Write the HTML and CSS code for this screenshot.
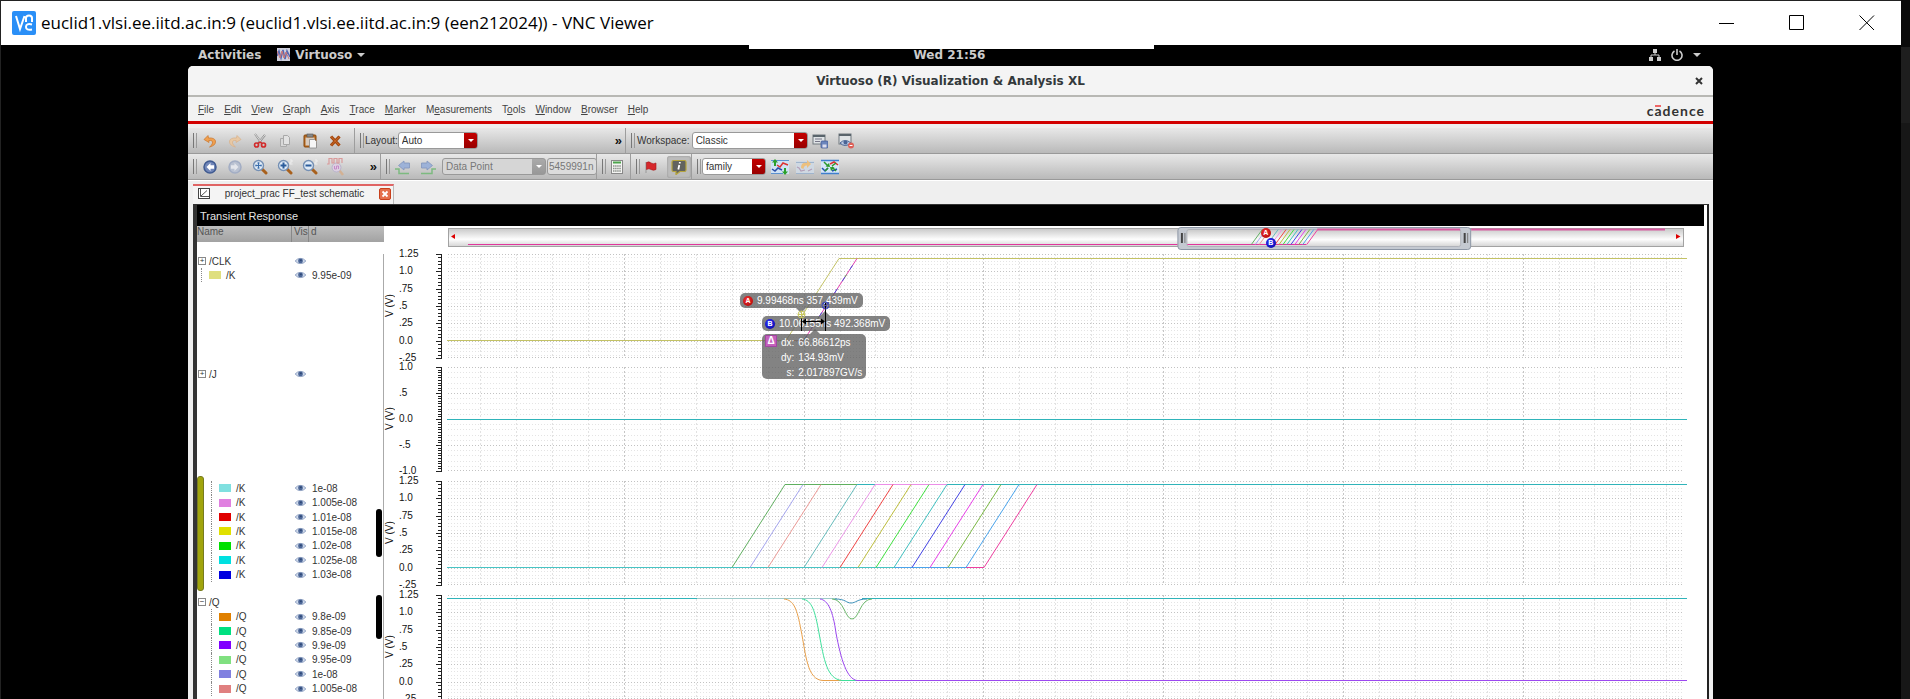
FILE: index.html
```html
<!DOCTYPE html>
<html lang="en">
<head>
<meta charset="utf-8">
<title>euclid1.vlsi.ee.iitd.ac.in:9 - VNC Viewer</title>
<link rel="stylesheet" href="styles.css">
</head>
<body>
<svg class="defs" aria-hidden="true">
  <symbol id="eye" viewBox="0 0 11 8"><path d="M0.3 4C2.5 .6 8.5 .6 10.7 4C8.5 7.4 2.5 7.4 .3 4Z" fill="#cfd9ea" stroke="#8a9dbf" stroke-width=".9"/><circle cx="5.5" cy="3.9" r="2.4" fill="#4a6596"/><circle cx="5.9" cy="3.2" r=".8" fill="#223a66"/></symbol>
  <symbol id="lens" viewBox="0 0 16 16"><path d="M9.500 9.500L14 14" stroke="#a8601c" stroke-width="3" stroke-linecap="round"/><circle cx="6.500" cy="6.500" r="5" fill="#dfeaf6" stroke="#7590b4" stroke-width="1.400"/></symbol>
</svg>
<div class="viewer">
  <header class="titlebar">
    <svg class="vnc-logo" viewBox="0 0 24 24"><rect width="24" height="24" rx="2" fill="#2a8ff7"/><path d="M4 5L8 18L12.500 5M14 11V7Q14 4.500 17 4.500Q20 4.500 20 7V11M20 13.500Q14 12 14 16Q14 19.500 20 18.500" fill="none" stroke="#fff" stroke-width="2"/></svg>
    <h1>euclid1.vlsi.ee.iitd.ac.in:9 (euclid1.vlsi.ee.iitd.ac.in:9 (een212024)) - VNC Viewer</h1>
    <div class="win-controls">
      <button aria-label="Minimize"><svg viewBox="0 0 16 16"><path d="M0 8.500H15" /></svg></button>
      <button aria-label="Maximize"><svg viewBox="0 0 16 16"><path d="M.5.5H14.500V14.500H.5Z"/></svg></button>
      <button aria-label="Close"><svg viewBox="0 0 16 16"><path d="M.5.5L15 15M15 .5L.5 15"/></svg></button>
    </div>
  </header>
  <main class="desktop">
    <div class="vnc-handle"></div>
    <div class="gnome-bar">
      <div class="gnome-left">
        <button>Activities</button>
        <button class="app-menu"><svg viewBox="0 0 13 13"><rect width="13" height="13" fill="#cfd0dc"/><path d="M0 8L2 3L4 10L6 2L8 11L10 3L13 9" fill="none" stroke="#5468b4" stroke-width="1.500"/><path d="M0 3L3 10L5 3L7 10L9 4L12 11" fill="none" stroke="#c77" stroke-width="1"/></svg>Virtuoso<i class="caret"></i></button>
      </div>
      <time>Wed 21:56</time>
      <button class="gnome-right" aria-label="System">
        <svg viewBox="0 0 12 12"><path d="M4 0h4v4H4zM0 8h4v4H0zM8 8h4v4H8z" fill="#ccc"/><path d="M6 4v2M2 8V6H10V8" stroke="#ccc" fill="none"/></svg>
        <svg viewBox="0 0 12 12"><path d="M3.500 2A5 5 0 1 0 8.500 2M6 0V6" fill="none" stroke="#ccc" stroke-width="1.600"/></svg>
        <i class="caret"></i>
      </button>
    </div>
    <section class="window">
      <div class="window-title"><h2>Virtuoso (R) Visualization &amp; Analysis XL</h2><button aria-label="Close window"><svg viewBox="0 0 8 8"><path d="M1 1L7 7M7 1L1 7" stroke="#333" stroke-width="2"/></svg></button></div>
      <nav class="menu">
        <button><u>F</u>ile</button><button><u>E</u>dit</button><button><u>V</u>iew</button><button><u>G</u>raph</button><button><u>A</u>xis</button><button><u>T</u>race</button><button><u>M</u>arker</button><button>M<u>e</u>asurements</button><button>T<u>o</u>ols</button><button><u>W</u>indow</button><button><u>B</u>rowser</button><button><u>H</u>elp</button>
        <span class="brand">c<span class="brand-a">a</span>dence</span>
      </nav>
      <div class="toolbar">
        <div class="tools edit-tools">
          <button aria-label="Undo"><svg viewBox="0 0 16 16"><path d="M6 2.500L2 6.500L7 9.500L6.800 7.500Q11 7 10.500 10Q10 12.500 7.500 14Q14 12.500 13.500 8Q12.500 4.500 6.500 5Z" fill="#f0a050" stroke="#c8742a" stroke-width=".7"/></svg></button>
          <button aria-label="Redo" disabled><svg viewBox="0 0 16 16"><path d="M10 2.500L14 6.500L9 9.500L9.200 7.500Q5 7 5.500 10Q6 12.500 8.500 14Q2 12.500 2.500 8Q3.500 4.500 9.500 5Z" fill="#e8c8a4" stroke="#d8b088" stroke-width=".7"/></svg></button>
          <button aria-label="Cut"><svg viewBox="0 0 16 16"><path d="M3 1L9.500 10M13 2L6 10.500" stroke="#8a8a8a" stroke-width="2"/><path d="M3 1L9 9M13 2L7 9" stroke="#f4f4f4" stroke-width=".8"/><circle cx="4.500" cy="12" r="2" fill="none" stroke="#d22c2c" stroke-width="1.700"/><circle cx="11.500" cy="12" r="2" fill="none" stroke="#d22c2c" stroke-width="1.700"/><path d="M6 10.500L8 9L10 10.500" fill="none" stroke="#d22c2c" stroke-width="1.500"/></svg></button>
          <button aria-label="Copy" disabled><svg viewBox="0 0 16 16"><path d="M3.500 5.500H9.500V13.500H3.500Z" fill="#d8d8d8" stroke="#aaa"/><path d="M6.500 2.500H10.500L12.500 4.500V11.500H6.500Z" fill="#e2e2e2" stroke="#a8a8a8"/></svg></button>
          <button aria-label="Paste"><svg viewBox="0 0 16 16"><rect x="2" y="2" width="12" height="12" rx="1" fill="#b7691d" stroke="#87490f"/><rect x="3.500" y="4.500" width="9" height="8" fill="#d8ccc0"/><rect x="5" y="1" width="6" height="3" fill="#888" stroke="#555" stroke-width=".6"/><path d="M7.500 6.500H12.500L14.500 8.500V15H7.500Z" fill="#f6f6f6" stroke="#888" stroke-width=".8"/></svg></button>
          <button aria-label="Delete"><svg viewBox="0 0 16 16"><path d="M4 3.500L12.500 12.500M12.500 3.500L4 12.500" stroke="#a3470f" stroke-width="3.200"/><path d="M4 3.500L12.500 12.500M12.500 3.500L4 12.500" stroke="#cc6a26" stroke-width="1"/></svg></button>
        </div>
        <div class="tools layout-tools">
          <label for="layout">Layout:</label><span class="pick"><select id="layout"><option>Auto</option></select></span>
          <button class="more" aria-label="More layout tools">»</button>
        </div>
        <div class="tools rest">
          <label class="spaced" for="workspace">Workspace:</label><span class="pick pick-wide"><select id="workspace"><option>Classic</option></select></span>
          <button class="after-pick" aria-label="Save workspace"><svg viewBox="0 0 16 16"><rect x="1" y="2" width="12" height="9" fill="#dfe3e6" stroke="#70797f"/><path d="M1 3H13" stroke="#59646c" stroke-width="2"/><path d="M3 6H10M3 8.500H8" stroke="#778"/><rect x="9" y="8" width="7" height="7" rx="1" fill="#6c86bd" stroke="#3c5590" stroke-width=".7"/><rect x="10.500" y="11.500" width="4" height="3" fill="#dde"/></svg></button>
          <button class="gap-left" aria-label="Delete workspace"><svg viewBox="0 0 16 16"><rect x="1" y="1" width="12" height="10" fill="#dfe3e6" stroke="#70797f"/><path d="M1 2H13" stroke="#59646c" stroke-width="2"/><path d="M2 10Q7 5 13 10Q7 15 2 10Z" fill="#b9c8e2" stroke="#4a6596"/><circle cx="7.500" cy="9.500" r="2" fill="#4a6596"/><circle cx="13" cy="12.500" r="3" fill="#dd6058"/><path d="M11.500 12.500H14.500" stroke="#fff"/></svg></button>
        </div>
      </div>
      <div class="toolbar">
        <div class="tools view-tools">
          <button aria-label="Back"><svg viewBox="0 0 16 16"><circle cx="8" cy="8" r="6" fill="#7186b8" stroke="#3f5a90" stroke-width="1.500"/><path d="M8.500 4L4.500 8L8.500 12V9.800H12V6.200H8.500Z" fill="#fff"/></svg></button>
          <button aria-label="Forward" disabled><svg viewBox="0 0 16 16"><circle cx="8" cy="8" r="6" fill="#b9c1d1" stroke="#a2adc4" stroke-width="1.500"/><path d="M7.500 4L11.500 8L7.500 12V9.800H4V6.200H7.500Z" fill="#e4e6ec"/></svg></button>
          <button aria-label="Fit"><svg viewBox="0 0 16 16"><use href="#lens"/><path d="M3.500 6.500H9.500M6.500 3.500V9.500" stroke="#3b6eac" stroke-width="1.200"/><path d="M4 5.500V7.500M9 5.500V7.500M5.500 4H7.500M5.500 9H7.500" stroke="#3b6eac"/></svg></button>
          <button aria-label="Zoom in"><svg viewBox="0 0 16 16"><use href="#lens"/><path d="M3.500 6.500H9.500M6.500 3.500V9.500" stroke="#2b5c9c" stroke-width="2"/><path d="M13 1H15V3H13V5H15.500" fill="none" stroke="#eee"/></svg></button>
          <button aria-label="Zoom out"><svg viewBox="0 0 16 16"><use href="#lens"/><path d="M3.500 6.500H9.500" stroke="#2b5c9c" stroke-width="2"/><path d="M13 1H15V3H13V5H15.500" fill="none" stroke="#eee"/></svg></button>
          <button class="probe" aria-label="Zoom to waveform" disabled><svg viewBox="0 0 18 18"><path d="M12 12L16 17" stroke="#d3b193" stroke-width="2.500"/><circle cx="9.500" cy="9.500" r="4.500" fill="#dccfe0" stroke="#b9b3cb"/><path d="M0 6H2V.5H5V5H7V.5H10V5H12V.5H15V5" fill="none" stroke="#d99a9a" stroke-width="1.200"/><path d="M7.500 8V11H9.500V8H11.500V11" fill="none" stroke="#c68ac9"/></svg></button>
          <button class="more" aria-label="More view tools">»</button>
        </div>
        <div class="tools point-tools">
          <button aria-label="Previous point" disabled><svg viewBox="0 0 16 16"><path d="M0 10H4V14.500H14" fill="none" stroke="#7dba80" stroke-width="1.500"/><path d="M9 2L3.500 6.500L9 11V9H14.500V4H9Z" fill="#9db2d8" stroke="#8195bd" stroke-width=".8"/></svg></button>
          <button aria-label="Next point" disabled><svg viewBox="0 0 16 16"><path d="M1 14.500H12V10H16" fill="none" stroke="#7dba80" stroke-width="1.500"/><path d="M7 2L12.500 6.500L7 11V9H1.500V4H7Z" fill="#9db2d8" stroke="#8195bd" stroke-width=".8"/></svg></button>
          <div class="step-by"><span class="pick pick-off"><select aria-label="Step by" disabled><option>Data Point</option></select></span><input class="step" aria-label="Step value" value="5459991n" disabled></div>
        </div>
        <div class="tools calc-tools"><button aria-label="Calculator"><svg viewBox="0 0 16 16"><rect x="2.500" y="1.500" width="11" height="13" fill="#f4f4f2" stroke="#888"/><path d="M4 3.500H12" stroke="#4da54d" stroke-width="1.800"/><path d="M4 7H12M4 9.500H12M4 12H12" stroke="#8a8f8a" stroke-width="1.500" stroke-dasharray="1.500 .6"/></svg></button></div>
        <div class="tools flag-tools">
          <button aria-label="Flag"><svg viewBox="0 0 16 16"><path d="M3 3V14" stroke="#999"/><path d="M3.500 3.500Q6 2 8 4Q10.500 5.500 13 4V10.500Q10.500 12 8 10.500Q6 9 3.500 10.500Z" fill="#d6282c" stroke="#a51417" stroke-width=".6"/></svg></button>
          <button class="pressed" aria-label="Info balloons" aria-pressed="true"><svg viewBox="0 0 16 16"><path d="M2.500 1.500H13.500Q15 1.500 15 3V11Q15 12.500 13.500 12.500H9L5 15.500V12.500H2.500Q1 12.500 1 11V3Q1 1.500 2.500 1.500Z" fill="#62635f" stroke="#b6a43c" stroke-width="1.200"/><path d="M8.800 3V4.500M8.300 6L7.300 10.500" stroke="#fff" stroke-width="1.800"/></svg></button>
        </div>
        <div class="tools rest">
          <span class="pick pick-small"><select aria-label="Grouping"><option>family</option></select></span>
          <button class="wave first-wave" aria-label="Split strips"><svg viewBox="0 0 18 16"><rect x="0" y="1" width="18" height="14" fill="#cfe2f5"/><path d="M0 1.500H18M0 14.500H12" stroke="#5d92cf"/><path d="M6 6L9 8L12 4L17 6" fill="none" stroke="#d33" stroke-width="1.500"/><path d="M1 10L4 12L7 9L11 11" fill="none" stroke="#2a50a8" stroke-width="1.500"/><path d="M4 0L7 3.500H5V7H3V3.500H1ZM14 16L17 12.500H15V9H13V12.500H11Z" fill="#2ba02b"/></svg></button>
          <button class="wave" aria-label="Combine strips" disabled><svg viewBox="0 0 18 16"><rect y="2" width="18" height="13" fill="#cfd8e2"/><path d="M0 3.500H18M0 14.500H18" stroke="#9fb4cc"/><path d="M1 8L3 9L5 12L9 11M12 12L16 10" fill="none" stroke="#b39fb7" stroke-width="1.200"/><path d="M5 9Q5 3 11 4V1L15 5L11 9V6.500Q8 6 7.500 10Z" fill="#ecc07e"/></svg></button>
          <button class="wave" aria-label="Swap strips"><svg viewBox="0 0 18 16"><rect y="1" width="18" height="14" fill="#d6e6f7"/><path d="M0 1.500H18M0 14.500H18" stroke="#3f7fce" stroke-width="1.500"/><path d="M9 5L13 3L17 6" fill="none" stroke="#d33" stroke-width="1.500"/><path d="M1 9L4 12L7 9M11 12L16 10" fill="none" stroke="#2450b0" stroke-width="1.500"/><path d="M3 3L7 7M15 12L11 8M15 4L11 7M4 12L7 9" stroke="#2a9a2a" stroke-width="1.500"/><path d="M9 8L4.500 7.500L8 4ZM9 8L13.500 8.500L10 12Z" fill="#2a9a2a"/></svg></button>
        </div>
      </div>
      <div class="tabs"><div class="tab"><svg viewBox="0 0 12 11"><rect x=".5" y=".5" width="11" height="10" fill="#fff" stroke="#444"/><path d="M2.500 1V8.500H11M3 8L9 2.500" fill="none" stroke="#555"/></svg><span>project_prac FF_test schematic</span><button aria-label="Close tab"><svg viewBox="0 0 8 8"><path d="M1.500 1.500L6.500 6.500M6.500 1.500L1.500 6.500" stroke="#fff" stroke-width="1.800"/></svg></button></div></div>
      <div class="document">
        <h3>Transient Response</h3>
        <div class="overview-row">
          <div class="columns"><span>Name</span><span>Vis</span><span>d</span></div>
          <div class="overview">
            <svg viewBox="0 0 1237 24" preserveAspectRatio="none">
              <defs><linearGradient id="track" x1="0" y1="0" x2="0" y2="1"><stop offset="0" stop-color="#c9c9c9"/><stop offset=".6" stop-color="#fdfdfd"/><stop offset="1" stop-color="#d4d4d4"/></linearGradient></defs>
              <rect x=".5" y="2.500" width="1236" height="18" fill="url(#track)" stroke="#a2a2a2"/>
              <path d="M7 8V13L3 10.500Z" fill="#d00"/><path d="M1229 8V13L1233.500 10.500Z" fill="#d00"/>
              <rect x="730.500" y="1.500" width="293" height="22" rx="3" fill="#c4c9d1" stroke="#8c96a5"/>
              <rect x="739.500" y="3.500" width="274" height="17" rx="2" fill="url(#track)" stroke="#b0b3ba"/>
              <path d="M20 18.500H730M740 18.500H859" stroke="#e0359c"/><path d="M870 3.500H1013M1024 3.500H1218" stroke="#d85aa0" stroke-width="2"/>
              <g id="overview-traces" fill="none"></g>
              <path d="M734.500 7V17M1017.500 7V17" stroke="#444" stroke-width="2"/><path d="M737.500 7V17M1020.500 7V17" stroke="#777"/>
            </svg>
            <b class="pin pin-a">A</b><b class="pin pin-b">B</b>
          </div>
        </div>
        <div class="strips">
          <section class="strip">
            <div class="tree">
              <div class="row node open"><span class="name"><i class="box">+</i>/CLK</span><svg><use href="#eye"/></svg></div>
              <div class="row leaf shallow"><span class="name"><i style="background:#dfdf7f"></i>/K</span><svg><use href="#eye"/></svg><span>9.95e-09</span></div>
            </div>
            <div class="unit">V (V)</div>
            <ol class="scale"><li>1.25</li><li>1.0</li><li>.75</li><li>.5</li><li>.25</li><li>0.0</li><li>-.25</li></ol>
            <svg class="ticks" data-major="6" data-minor="5"></svg>
            <div class="plot">
              <svg viewBox="0 0 1240 104" preserveAspectRatio="none"><g class="grid" data-major="6"></g>
                <path d="M0 86.500H339L392 4.500H1240" stroke="#c3c265"/>
                <path d="M339 86.500H357" stroke="#d99a80"/><path d="M357 86L410 4.500" stroke="#e63fb0"/><path d="M357 86L410 4.500" stroke="#4a52d8" stroke-dasharray="5 9"/><path d="M357 86L410 4.500" stroke="#5cab5c" stroke-dasharray="3 22"/>
              </svg>
              <div class="tip tip-a"><b class="pin red">A</b>9.99468ns 357.439mV</div>
              <div class="tip tip-b"><b class="pin blue">B</b>10.06155ns 492.368mV</div>
              <div class="tip tip-d"><b class="delta">Δ</b><dl><dt>dx:</dt><dd>66.86612ps</dd><dt>dy:</dt><dd>134.93mV</dd><dt class="slope">s:</dt><dd>2.017897GV/s</dd></dl></div>
              <svg class="measure" viewBox="0 0 32 32"><path d="M4.500 16V30M28.500 2V30M6 20.500H27" stroke="#000" stroke-width="1"/><path d="M5 20.500L9 17.500V23.500ZM28 20.500L24 17.500V23.500Z"/><circle cx="4.500" cy="13.500" r="3.500" fill="none" stroke="#c9c860"/><path d="M4.500 10V17M1 13.500H8" stroke="#c9c860"/><circle cx="28.500" cy="4.500" r="3.500" fill="none" stroke="#3c46c0"/><path d="M26 2L31 7M31 2L26 7" stroke="#3c46c0"/></svg>
            </div>
          </section>
          <section class="strip">
            <div class="tree"><div class="row node"><span class="name"><i class="box">+</i>/J</span><svg><use href="#eye"/></svg></div></div>
            <div class="unit">V (V)</div>
            <ol class="scale"><li>1.0</li><li>.5</li><li>0.0</li><li>-.5</li><li>-1.0</li></ol>
            <svg class="ticks" data-major="4" data-minor="10"></svg>
            <div class="plot"><svg viewBox="0 0 1240 104" preserveAspectRatio="none"><g class="grid" data-major="4"></g><path d="M0 52.500H1240" stroke="#30b4ba"/></svg></div>
          </section>
          <section class="strip">
            <div class="tree full selected">
              <div class="row leaf"><span class="name"><i style="background:#80e0e0"></i>/K</span><svg><use href="#eye"/></svg><span>1e-08</span></div>
              <div class="row leaf"><span class="name"><i style="background:#e080e0"></i>/K</span><svg><use href="#eye"/></svg><span>1.005e-08</span></div>
              <div class="row leaf"><span class="name"><i style="background:#e00000"></i>/K</span><svg><use href="#eye"/></svg><span>1.01e-08</span></div>
              <div class="row leaf"><span class="name"><i style="background:#e0e000"></i>/K</span><svg><use href="#eye"/></svg><span>1.015e-08</span></div>
              <div class="row leaf"><span class="name"><i style="background:#00e000"></i>/K</span><svg><use href="#eye"/></svg><span>1.02e-08</span></div>
              <div class="row leaf"><span class="name"><i style="background:#00e0e0"></i>/K</span><svg><use href="#eye"/></svg><span>1.025e-08</span></div>
              <div class="row leaf"><span class="name"><i style="background:#0000e0"></i>/K</span><svg><use href="#eye"/></svg><span>1.03e-08</span></div>
              <div class="thumb mid"></div>
            </div>
            <div class="unit">V (V)</div>
            <ol class="scale"><li>1.25</li><li>1.0</li><li>.75</li><li>.5</li><li>.25</li><li>0.0</li><li>-.25</li></ol>
            <svg class="ticks" data-major="6" data-minor="5"></svg>
            <div class="plot"><svg viewBox="0 0 1240 104" preserveAspectRatio="none"><g class="grid" data-major="6"></g>
              <path d="M0 86.500H448" stroke="#48c4c4"/><path d="M448 86.500H519" stroke="#4aa4ec"/><path d="M519 86.500H537" stroke="#ee3fa0"/>
              <path d="M338 3.500H410" stroke="#5fb05f"/><path d="M410 3.500H428M500 3.500H1240" stroke="#30b4ba"/><path d="M428 3.500H500" stroke="#ec8fe8"/>
              <g id="sweep" fill="none"></g></svg></div>
          </section>
          <section class="strip">
            <div class="tree full">
              <div class="row node open"><span class="name"><i class="box">−</i>/Q</span><svg><use href="#eye"/></svg></div>
              <div class="row leaf"><span class="name"><i style="background:#e08000"></i>/Q</span><svg><use href="#eye"/></svg><span>9.8e-09</span></div>
              <div class="row leaf"><span class="name"><i style="background:#00e080"></i>/Q</span><svg><use href="#eye"/></svg><span>9.85e-09</span></div>
              <div class="row leaf"><span class="name"><i style="background:#8000ff"></i>/Q</span><svg><use href="#eye"/></svg><span>9.9e-09</span></div>
              <div class="row leaf"><span class="name"><i style="background:#80e080"></i>/Q</span><svg><use href="#eye"/></svg><span>9.95e-09</span></div>
              <div class="row leaf"><span class="name"><i style="background:#8080e0"></i>/Q</span><svg><use href="#eye"/></svg><span>1e-08</span></div>
              <div class="row leaf"><span class="name"><i style="background:#e08080"></i>/Q</span><svg><use href="#eye"/></svg><span>1.005e-08</span></div>
              <div class="thumb"></div>
            </div>
            <div class="unit">V (V)</div>
            <ol class="scale"><li>1.25</li><li>1.0</li><li>.75</li><li>.5</li><li>.25</li><li>0.0</li><li>-.25</li></ol>
            <svg class="ticks" data-major="6" data-minor="5"></svg>
            <div class="plot"><svg viewBox="0 0 1240 104" preserveAspectRatio="none"><g class="grid" data-major="6"></g>
              <path d="M0 3.500H390M415 3.500H1240" stroke="#30b4ba"/><path d="M250 3.500H390" stroke="#9cc9c9"/>
              <g fill="none">
                <path d="M337 4C347 5 350 14 354 35C359 60 360 85 376 85.500H412" stroke="#e9a04a"/>
                <path d="M355 4C365 5 368 16 372 38C377 65 380 84 395 85.500H410" stroke="#3fe09c"/>
                <path d="M373 4C381 5 386 16 389 38C394 65 400 84 410 85.500H1240" stroke="#9c48f0"/>
                <path d="M385 4C397 4 398 24 405 24S413 4 425 4" stroke="#6cb86c"/>
                <path d="M388 4C399 4 399 8 404 8S410 4 420 4" stroke="#3a8fb8"/>
              </g></svg></div>
          </section>
        </div>
      </div>
    </section>
  </main>
</div>
<script src="plots.js"></script>
</body>
</html>
```
FILE: styles.css
```css
* { box-sizing: border-box; }
body { margin: 0; height: 100vh; overflow: hidden; background: linear-gradient(#0a0a0a 47px, #1e1e1e 47px 123px, #171717 123px); font-family: "Liberation Sans", Arial, sans-serif; font-size: 10px; color: #333; }
h1, h2, h3, dl, dd, ol { margin: 0; padding: 0; font-weight: normal; }
button { border: 0; padding: 0; background: none; font: inherit; color: inherit; }
svg { display: block; flex: none; }
.defs { position: absolute; width: 0; height: 0; }
.viewer { height: 100vh; margin-right: 9px; display: flex; flex-direction: column; border-left: 1px solid #222; background: #000; }

.titlebar { display: flex; align-items: center; height: 45px; flex: none; padding: 0 26px 0 11px; border-top: 1px solid #222; background: #fff; }
.vnc-logo { width: 24px; height: 24px; margin-right: 5px; }
.titlebar h1 { flex: 1; font: 17px/24px "Open Sans", "Noto Sans", sans-serif; color: #000; white-space: nowrap; }
.win-controls { display: flex; gap: 54px; }
.win-controls svg { width: 16px; height: 16px; fill: none; stroke: #000; stroke-width: 1; }

.desktop { position: relative; flex: 1; min-height: 0; display: flex; flex-direction: column; padding: 0 188px 0 187px; }
.vnc-handle { position: absolute; z-index: 2; left: 50%; top: 0; width: 405px; margin-left: -202px; height: 4px; background: #fff; }
.gnome-bar { display: grid; grid-template-columns: 1fr auto 1fr; align-items: center; height: 21px; flex: none; padding: 0 12px 2px 10px; font: bold 12px "DejaVu Sans", sans-serif; color: #ccc; }
.gnome-left { display: flex; gap: 16px; }
.app-menu { display: flex; align-items: center; gap: 5px; }
.app-menu svg { width: 13px; height: 13px; }
.caret { border: 4px solid transparent; border-top-color: #ccc; border-bottom: 0; }
.gnome-right { justify-self: end; display: flex; align-items: center; gap: 10px; }
.gnome-right svg { width: 12px; height: 12px; }

.window { flex: 1; min-height: 0; display: flex; flex-direction: column; border-radius: 5px 5px 0 0; background: #efefef; overflow: hidden; }
.window-title { display: grid; grid-template-columns: 1fr auto 1fr; align-items: center; height: 31px; flex: none; padding: 0 10px; background: #f4f4f4; border-bottom: 2px solid #b8b8b4; }
.window-title h2 { grid-column: 2; font: bold 12px "DejaVu Sans", sans-serif; color: #33393b; }
.window-title button { justify-self: end; }
.window-title svg { width: 8px; height: 8px; }
.menu { display: flex; align-items: center; gap: 10px; height: 27px; flex: none; padding: 0 8px 0 10px; background: #f2f2f2; border-bottom: 3px solid #d20000; color: #444; }
.brand { margin-left: auto; padding-top: 2px; font: bold 14px "Lato", sans-serif; color: #333; letter-spacing: 1px; }
.brand-a { background: linear-gradient(#e66 0 0) 1px 3px / 6px 2px no-repeat; }

.toolbar { display: flex; height: 26px; flex: none; }
.menu + .toolbar { margin-top: 4px; }
.tools { display: flex; align-items: center; padding-left: 14px; border-right: 1px solid #9d9d9d; border-bottom: 1px solid #999; background: linear-gradient(#777 0 0) 5px 5px / 1px 15px no-repeat, linear-gradient(#999 0 0) 8px 5px / 1px 15px no-repeat, linear-gradient(#e8e8e8, #b9b9b9); }
.tools svg { width: 16px; height: 16px; }
.edit-tools { width: 167px; gap: 9px; }
.layout-tools { width: 271px; padding-left: 10px; }
.view-tools { width: 193px; gap: 9px; }
.point-tools { width: 216px; gap: 9px; }
.calc-tools { width: 34px; padding-left: 12px; }
.flag-tools { width: 61px; gap: 8px; padding-left: 12px; }
.rest { flex: 1; border-right: 0; padding-left: 10px; }
.more { margin-left: auto; padding-right: 3px; font-weight: bold; font-size: 13px; color: #111; }
.pressed { padding: 3px 4px; border-radius: 3px; background: #bcbcbc; box-shadow: inset 0 0 2px #888; }
.spaced { padding: 0 2px 0 1px; }
.after-pick { margin-left: 4px; }
.gap-left { margin-left: 10px; }
.wave { margin-left: 7px; }
.first-wave { margin-left: 5px; }
.wave svg, .probe svg { width: 18px; }
.probe svg { height: 18px; }
.pick { position: relative; display: block; width: 80px; height: 17px; }
.pick-wide { width: 116px; }
.pick-small { width: 64px; }
.pick select { appearance: none; width: 100%; height: 100%; padding: 0 3px; border: 1px solid #999; border-radius: 3px; background: linear-gradient(#c40000, #980000) right / 13px 100% no-repeat, #fff; font: inherit; color: #333; opacity: 1; }
.pick::after { content: ""; position: absolute; right: 4px; top: 7px; border: 3px solid transparent; border-top-color: #fff; border-bottom: 0; pointer-events: none; }
.pick-off { width: 104px; }
.pick-off select { background: linear-gradient(#aaa, #989898) right / 13px 100% no-repeat, #d6d6d6; color: #777; }
.step-by { display: flex; gap: 1px; margin-left: -3px; }
.step { width: 50px; height: 17px; padding: 0 1px; border: 1px solid #999; border-radius: 3px; background: #dcdcdc; font: inherit; color: #777; }

.tabs { display: flex; align-items: flex-end; height: 24px; flex: none; padding-left: 5px; border-top: 1px solid #fff; }
.tab { display: flex; align-items: center; width: 201px; height: 20px; padding: 0 2px 3px 5px; border-top: 2px solid #e06464; border-right: 1px solid #bbb; background: #f4f4f4; }
.tab svg { width: 12px; height: 11px; }
.tab span { flex: 1; text-align: center; }
.tab button { padding: 1px; border: 1px solid #c8401c; border-radius: 2px; background: #e5704c; }
.tab button svg { width: 8px; height: 8px; }

.document { flex: 1; min-height: 0; margin-left: 5px; margin-right: 4px; border-left: 4px solid #333; border-right: 2px solid #222; border-top: 1px solid #333; background: #fff; }
.document h3 { height: 21px; padding-left: 3px; margin-right: 3px; background: #000; color: #e4e4e4; font-size: 11px; line-height: 23px; }
.overview-row { display: flex; height: 28px; }
.columns { display: grid; grid-template-columns: 94px 17px 1fr; width: 187px; height: 16px; background: linear-gradient(#bebebe, #a2a2a2); color: #555; line-height: 12px; }
.columns span + span { padding-left: 2px; border-left: 1px solid #888; }
.overview { position: relative; flex: 1; margin: 0 23px 0 64px; }
.overview svg { width: 100%; height: 24px; }
.pin { display: inline-flex; align-items: center; justify-content: center; width: 10px; height: 10px; border-radius: 5px; background: radial-gradient(circle at 40% 35%, #e33, #a00); color: #fff; font-size: 7px; line-height: 10px; }
.pin-a, .pin-b { position: absolute; left: 66%; top: 2px; margin-left: -3px; }
.pin-b, .blue { background: radial-gradient(circle at 40% 35%, #33f, #009); }
.pin-b { margin-left: 2px; top: 12px; }

.strips { display: grid; grid-template-rows: 113px 114px 114px 114px; }
.strip { display: grid; grid-template-columns: 187px 13px 37px 13px 1fr; background: linear-gradient(#aaa 0 0) 186px 0 / 1px 100% no-repeat; }
.tree { position: relative; display: grid; grid-auto-rows: 14px; align-content: start; color: #333; }
.tree.full { grid-template-rows: repeat(7, 1fr); height: 101px; }
.row { display: grid; grid-template-columns: 98px 17px 1fr; align-items: center; }
.row svg { width: 11px; height: 8px; }
.name { display: flex; align-items: center; }
.name i { width: 12px; height: 8px; margin-right: 5px; }
.leaf .name { padding-left: 7px; margin-left: 14px; border-left: 1px dotted #888; height: 100%; }
.shallow .name { margin-left: 4px; }
.name .box { width: 8px; height: 8px; margin: 0 3px 0 1px; border: 1px solid #888; font: 8px/6px "Liberation Sans", sans-serif; text-align: center; }
.selected::before { content: ""; position: absolute; left: 0; top: -5px; width: 5px; height: 113px; border: 1px solid #777b20; border-radius: 3px; background: #a0a40c; }
.thumb { position: absolute; right: 2px; top: 0; width: 6px; height: 44px; border-radius: 3px; background: #000; }
.mid { top: 28px; height: 48px; }
.unit { writing-mode: vertical-rl; transform: rotate(180deg); height: 104px; text-align: center; line-height: 12px; color: #111; }
.scale { list-style: none; display: flex; flex-direction: column; justify-content: space-between; height: 116px; margin: -6px 0; padding-left: 2px; line-height: 12px; color: #111; }
.ticks { width: 8px; height: 105px; }
.plot { position: relative; margin-right: 20px; }
.plot > svg:first-child { width: 100%; height: 104px; fill: none; }
.plot .measure { position: absolute; left: 350px; top: 47px; width: 32px; height: 32px; }
.tip { position: absolute; display: flex; align-items: center; height: 15px; padding: 0 3px; gap: 4px; border-radius: 5px; background: rgba(96, 96, 96, .78); color: #fff; white-space: nowrap; }
.tip::after { content: ""; position: absolute; border: 5px solid transparent; }
.tip-a { left: 293px; top: 39px; width: 123px; }
.tip-a::after { left: 56px; top: 15px; border-top-color: rgba(96, 96, 96, .78); border-bottom: 0; }
.tip-b { left: 315px; top: 62px; width: 128px; }
.tip-b::after { left: 58px; top: -5px; border-bottom-color: rgba(96, 96, 96, .78); border-top: 0; }
.tip-d { left: 315px; top: 80px; width: 104px; height: 45px; z-index: 1; align-items: flex-start; padding-top: 1px; }
.tip-d::after { left: 48px; top: -5px; border-bottom-color: rgba(96, 96, 96, .78); border-top: 0; }
.tip dl { display: grid; grid-template-columns: auto 1fr; column-gap: 4px; line-height: 15px; }
.slope { text-align: right; }
.delta { width: 12px; height: 12px; background: #c460bc; border: 1px solid #a048a0; line-height: 10px; text-align: center; }
```
FILE: plots.js
```js
const NS = 'http://www.w3.org/2000/svg';

function line(parent, d, attrs) {
  const p = document.createElementNS(NS, 'path');
  p.setAttribute('d', d);
  for (const key in attrs) p.setAttribute(key, attrs[key]);
  parent.appendChild(p);
}

document.querySelectorAll('.grid').forEach((g) => {
  const majors = Number(g.dataset.major);
  const step = 104 / majors;
  for (let i = 0; i <= majors; i++) {
    const y = Math.min(103, Math.round(i * step)) + 0.5;
    line(g, `M1 ${y}H1237`, { stroke: '#c2c2c2', 'stroke-dasharray': '1 2' });
    if (i === majors) break;
    for (let k = 1; k < 5; k++) {
      const m = Math.round(i * step + k * step / 5) + 0.5;
      line(g, `M1 ${m}H1237`, { stroke: '#e4e4e4', 'stroke-dasharray': '1 2' });
    }
  }
  for (let i = 0; i < 34; i++) {
    const x = Math.round(33 + i * 35.95) + 0.5;
    line(g, `M${x} 0V104`, { stroke: i % 5 === 4 ? '#c6c6c6' : '#e2e2e2', 'stroke-dasharray': '2 2' });
  }
});

document.querySelectorAll('.ticks').forEach((svg) => {
  const majors = Number(svg.dataset.major);
  const minors = Number(svg.dataset.minor);
  const total = majors * minors;
  let d = 'M7.5 0V105';
  for (let i = 0; i <= total; i++) {
    const y = Math.round(i * 104 / total) + 0.5;
    d += `M${i % minors ? 4 : 2} ${y}H8`;
  }
  line(svg, d, { stroke: '#222', fill: 'none' });
});

const sweep = [
  [285, '#62b062'], [303, '#a5a5ee'], [321, '#eb9a96'], [357, '#66bcbc'], [375, '#ec96e8'],
  [393, '#f04444'], [411, '#bdbd3c'], [429, '#40e040'], [447, '#40c0c0'], [465, '#4444e4'],
  [483, '#e840e8'], [501, '#7ab843'], [519, '#4aa4ec'], [537, '#ee3fa0']
];
const main = document.getElementById('sweep');
const overview = document.getElementById('overview-traces');
sweep.forEach(([x, stroke]) => {
  line(main, `M${x} 86.5L${x + 53} 3.5`, { stroke });
  const ox = 804 + (x - 285) * 0.22;
  line(overview, `M${ox} 18.5L${ox + 11} 3.5`, { stroke });
});
```
